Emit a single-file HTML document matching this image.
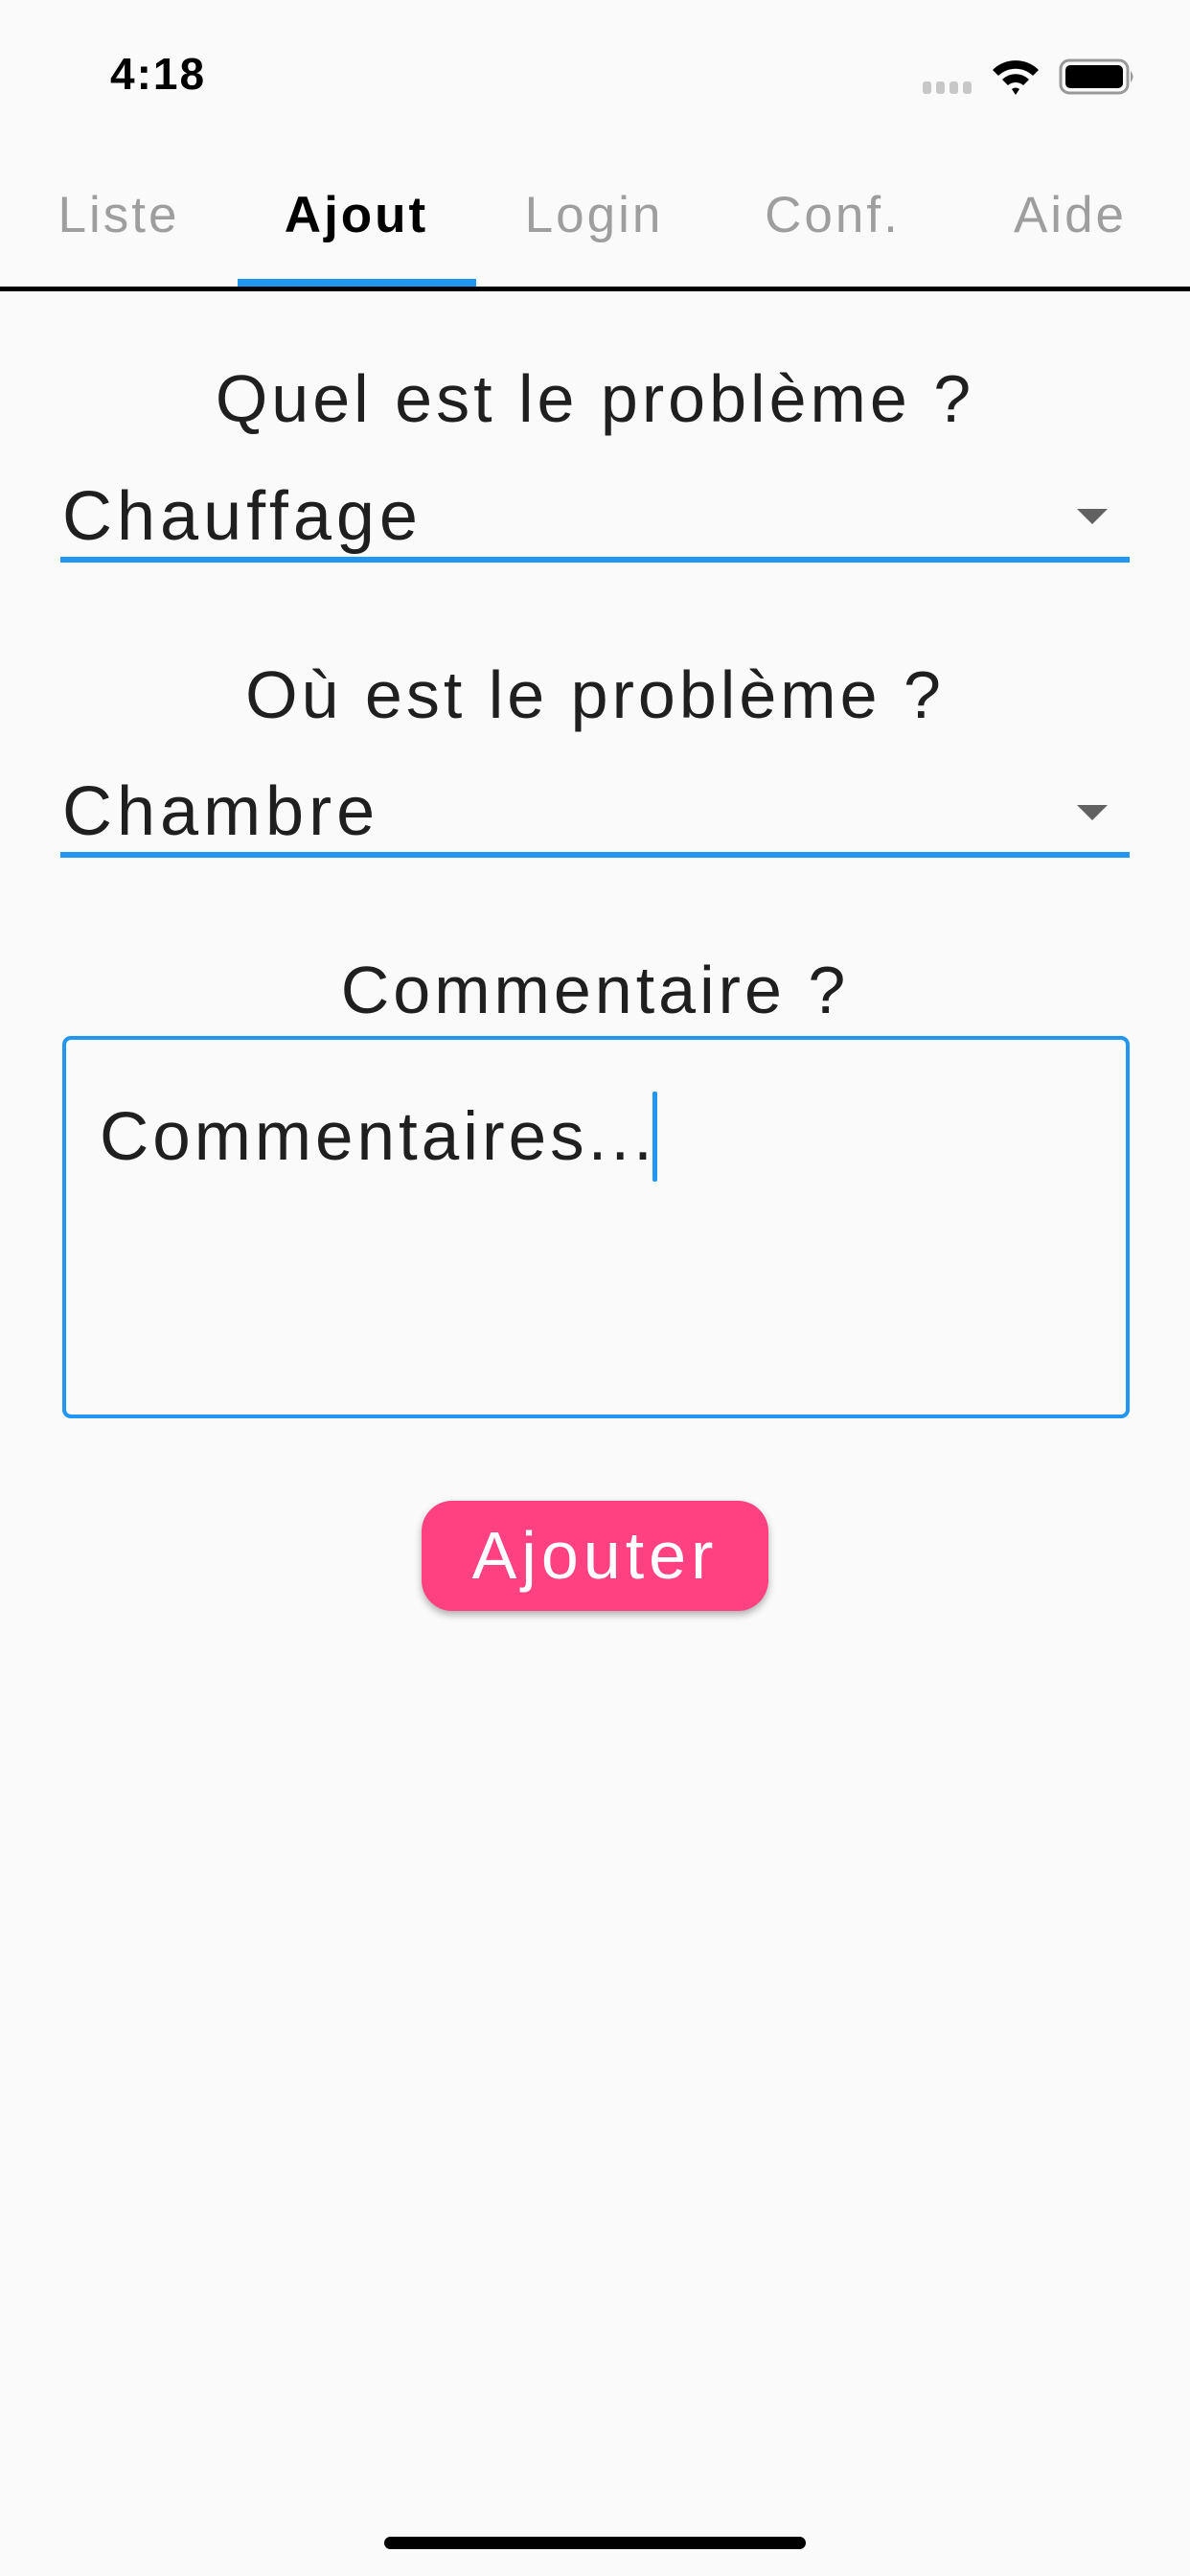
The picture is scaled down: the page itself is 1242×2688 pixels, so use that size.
<!DOCTYPE html>
<html><head><meta charset="utf-8"><style>
*{margin:0;padding:0;box-sizing:border-box}
html,body{width:1242px;height:2688px;background:#fafafa;overflow:hidden;font-family:"Liberation Sans",sans-serif;color:#1f1f1f}
.abs{position:absolute}
.tab{position:absolute;top:194px;width:248px;text-align:center;font-size:53px;letter-spacing:3px;color:#9e9e9e}
.lbl{position:absolute;left:0;width:1242px;text-align:center;font-size:70px;letter-spacing:4px;color:#1f1f1f}
.dd{position:absolute;left:65px;font-size:72px;letter-spacing:5px;color:#1f1f1f}
.line{position:absolute;left:63px;width:1116px;height:6px;background:#2196f3}
.arrow{position:absolute;left:1124px;width:0;height:0;border-left:16px solid transparent;border-right:16px solid transparent;border-top:16px solid #616161}
</style></head><body>
<div class="abs" style="left:115px;top:50px;font-size:46px;font-weight:bold;letter-spacing:2px;color:#000">4:18</div>
<svg class="abs" style="left:960px;top:55px" width="230" height="50" viewBox="0 0 230 50">
<g fill="#c7c7c7"><rect x="3" y="30" width="9" height="13" rx="3"/><rect x="17" y="30" width="9" height="13" rx="3"/><rect x="31" y="30" width="9" height="13" rx="3"/><rect x="45" y="30" width="9" height="13" rx="3"/></g>
<path d="M76 18 A34 34 0 0 1 124 18 L118 24 A26 26 0 0 0 82 24Z M86 28 A20 20 0 0 1 114 28 L108 34 A12 12 0 0 0 92 34Z M96 38 A6 6 0 0 1 104 38 L100 44Z" fill="#000"/>
<rect x="147" y="8" width="70" height="34" rx="9" fill="none" stroke="#999" stroke-width="3"/>
<rect x="152" y="13" width="60" height="24" rx="5" fill="#000"/>
<path d="M220 19 q5 6 0 12" fill="#999"/>
</svg>
<div class="tab" style="left:0">Liste</div>
<div class="tab" style="left:248px;color:#000;font-weight:bold">Ajout</div>
<div class="tab" style="left:496px">Login</div>
<div class="tab" style="left:745px">Conf.</div>
<div class="tab" style="left:993px">Aide</div>
<div class="abs" style="left:248px;top:291px;width:249px;height:8px;background:#2196f3"></div>
<div class="abs" style="left:0;top:299px;width:1242px;height:5px;background:#000"></div>

<div class="lbl" style="top:376px">Quel est le problème ?</div>
<div class="dd" style="top:498px">Chauffage</div>
<div class="arrow" style="top:531px"></div>
<div class="line" style="top:581px"></div>

<div class="lbl" style="top:685px">Où est le problème ?</div>
<div class="dd" style="top:806px">Chambre</div>
<div class="arrow" style="top:840px"></div>
<div class="line" style="top:889px"></div>

<div class="lbl" style="top:993px">Commentaire ?</div>
<div class="abs" style="left:65px;top:1081px;width:1114px;height:399px;border:4px solid #2196f3;border-radius:9px"></div>
<div class="abs" style="left:104px;top:1146px;font-size:71px;letter-spacing:4px;color:#1f1f1f">Commentaires...</div>
<div class="abs" style="left:681px;top:1139px;width:5px;height:94px;background:#2196f3;border-radius:2px"></div>

<div class="abs" style="left:440px;top:1566px;width:362px;height:115px;background:#ff4081;border-radius:32px;box-shadow:0 4px 8px rgba(0,0,0,.3);color:#fff;font-size:70px;letter-spacing:5px;text-align:center;line-height:115px">Ajouter</div>

<div class="abs" style="left:401px;top:2647px;width:440px;height:13px;background:#000;border-radius:7px"></div>
</body></html>
